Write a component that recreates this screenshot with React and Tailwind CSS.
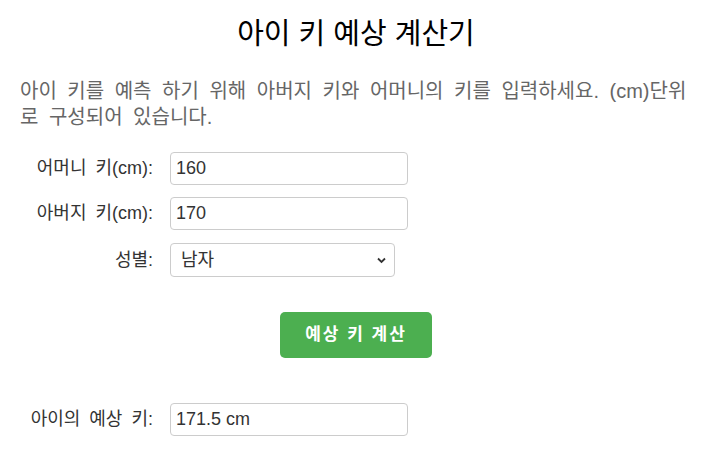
import React, { useState } from 'react';

const font = { fontFamily: '"Liberation Sans", "Noto Sans CJK KR", sans-serif' };

const Row = ({ label, children, className = '' }) => (
  <div className={`flex items-center ${className}`}>
    <label className="w-[133px] shrink-0 text-right text-[18px] text-[#333] [word-spacing:4px]">{label}</label>
    <div className="ml-[17px]">{children}</div>
  </div>
);

export default function App() {
  const [mother, setMother] = useState('160');
  const [father, setFather] = useState('170');
  const [gender, setGender] = useState('male');
  const [result, setResult] = useState('171.5 cm');

  const calc = () => {
    const m = parseFloat(mother) || 0;
    const f = parseFloat(father) || 0;
    const h = gender === 'male' ? (m + f + 13) / 2 : (m + f - 13) / 2;
    setResult(`${h.toFixed(1)} cm`);
  };

  const inputCls =
    'h-[33px] w-[238px] rounded-[4px] border border-[#ccc] px-[5px] text-[18px] text-[#333] outline-none';

  return (
    <div className="min-h-screen bg-white pl-5 pr-[8px]" style={font}>
      <h1 className="pt-[17px] text-center text-[29px] leading-[34px] text-black pr-[3px]">아이 키 예상 계산기</h1>
      <p className="mt-[27px] text-[20px] leading-[26px] text-[#666] [word-spacing:5px] whitespace-nowrap">
        아이 키를 예측 하기 위해 아버지 키와 어머니의 키를 입력하세요. (cm)단위
        <br />
        로 구성되어 있습니다.
      </p>

      <div className="mt-[22px] flex flex-col">
        <Row label="어머니 키(cm):">
          <input value={mother} onChange={(e) => setMother(e.target.value)} className={inputCls} />
        </Row>
        <Row label="아버지 키(cm):" className="mt-[12px]">
          <input value={father} onChange={(e) => setFather(e.target.value)} className={inputCls} />
        </Row>
        <Row label="성별:" className="mt-[13px]">
          <div className="relative">
            <select
              value={gender}
              onChange={(e) => setGender(e.target.value)}
              className="h-[34px] w-[225px] appearance-none rounded-[4px] border border-[#ccc] bg-white pl-[10px] text-[18px] text-[#333] outline-none"
            >
              <option value="male">남자</option>
              <option value="female">여자</option>
            </select>
            <svg className="pointer-events-none absolute right-[9px] top-[14px]" width="9" height="7" viewBox="0 0 9 7">
              <path d="M1 1.5 L4.5 5 L8 1.5" fill="none" stroke="#333" strokeWidth="1.8" />
            </svg>
          </div>
        </Row>
      </div>

      <div className="mt-[35px] flex justify-center pr-[3px]">
        <button
          onClick={calc}
          className="h-[46px] w-[152px] rounded-[5px] bg-[#4caf50] text-[17px] font-bold tracking-[2px] text-white"
        >
          예상 키 계산
        </button>
      </div>

      <Row label="아이의 예상 키:" className="mt-[45px]">
        <input value={result} readOnly className={inputCls} />
      </Row>
    </div>
  );
}
